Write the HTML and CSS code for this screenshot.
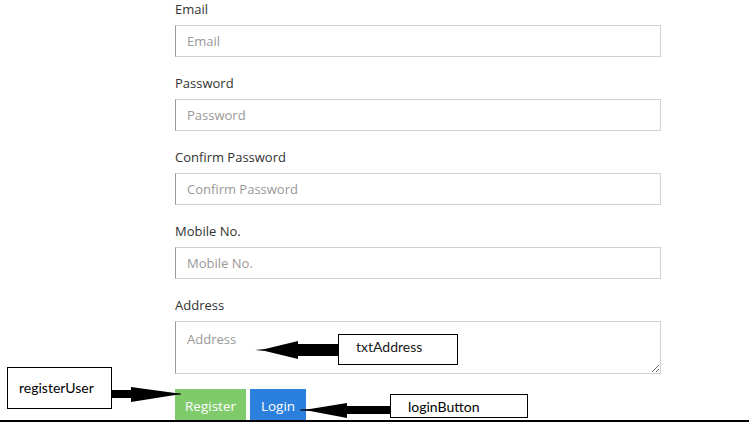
FILE: index.html
```html
<!DOCTYPE html>
<html>
<head>
<meta charset="utf-8">
<link rel="stylesheet" href="styles.css">
</head>
<body>
<form class="form">
  <div class="group">
    <label class="label">Email</label>
    <input class="field" type="text" placeholder="Email">
  </div>
  <div class="group">
    <label class="label">Password</label>
    <input class="field" type="password" placeholder="Password">
  </div>
  <div class="group">
    <label class="label">Confirm Password</label>
    <input class="field" type="password" placeholder="Confirm Password">
  </div>
  <div class="group">
    <label class="label">Mobile No.</label>
    <input class="field" type="text" placeholder="Mobile No.">
  </div>
  <div class="group group-last">
    <label class="label">Address</label>
    <textarea class="field area" placeholder="Address"></textarea>
  </div>
  <div class="actions">
    <button type="button" class="btn btn-register">Register</button>
    <button type="button" class="btn btn-login">Login</button>
  </div>
</form>

<svg class="overlay" width="749" height="422" viewBox="0 0 749 422">
  <polygon points="109,390 131,390 131,387 175,393 181,393.5 181,394.5 175,395 131,402 131,398 109,398" fill="#000"/>
  <polygon points="255,350 265,349 298,341 298,344 338,344 338,356 298,356 298,359 265,351" fill="#000"/>
  <polygon points="300,409.5 310,409 347,403 347,406 390,406 390,414 347,414 347,418 310,411 300,410.5" fill="#000"/>
  <rect x="0" y="420" width="749" height="2" fill="#000"/>
</svg>

<div class="note note-register">registerUser</div>
<div class="note note-address">txtAddress</div>
<div class="note note-login">loginButton</div>
</body>
</html>
```
FILE: styles.css
```css
html, body {
  margin: 0;
  padding: 0;
  overflow: hidden;
  background: #fff;
}
body {
  position: relative;
  width: 749px;
  height: 422px;
  font-family: "Open Sans", "Noto Sans", sans-serif;
  font-size: 13px;
  color: #333;
}
.form {
  display: flex;
  flex-direction: column;
  padding-left: 175px;
  width: 486px;
}
.group {
  display: flex;
  flex-direction: column;
  margin-bottom: 17px;
}
.group-last {
  margin-bottom: 15px;
}
.label {
  display: block;
  height: 20px;
  line-height: 18px;
  margin-bottom: 5px;
  color: #333;
}
.field {
  box-sizing: border-box;
  width: 486px;
  height: 32px;
  margin: 0;
  padding: 0 11px;
  border: 1px solid #cfd3d9;
  border-left-color: #9a9a9a;
  border-radius: 0;
  font-family: "Open Sans", "Noto Sans", sans-serif;
  font-size: 13px;
  color: #333;
  outline: none;
  background: #fff;
}
.field::placeholder {
  color: #999;
}
.area {
  height: 53px;
  padding: 8px 11px;
  resize: vertical;
  display: block;
}
.actions {
  display: flex;
  gap: 4px;
}
.btn {
  height: 34px;
  border: none;
  border-radius: 0;
  padding: 0;
  text-align: center;
  font-family: "Open Sans", "Noto Sans", sans-serif;
  font-size: 13.5px;
  color: #fff;
}
.btn-register {
  width: 71px;
  background: #7fcb6b;
}
.btn-login {
  width: 56px;
  background: #2b80dd;
}
.overlay {
  position: absolute;
  left: 0;
  top: 0;
  pointer-events: none;
}
.note {
  position: absolute;
  box-sizing: border-box;
  border: 1px solid #000;
  background: #fff;
  font-family: "Lato", "Liberation Sans", sans-serif;
  font-size: 14px;
  color: #000;
  line-height: 16px;
}
.note-register {
  left: 7px;
  top: 367px;
  width: 105px;
  height: 42px;
  padding: 12px 0 0 11px;
}
.note-address {
  left: 338px;
  top: 334px;
  width: 120px;
  height: 31px;
  padding: 4px 0 0 17px;
  color: #1a1a1a;
}
.note-login {
  left: 390px;
  top: 394px;
  width: 138px;
  height: 24px;
  padding: 4px 0 0 17px;
}
```
